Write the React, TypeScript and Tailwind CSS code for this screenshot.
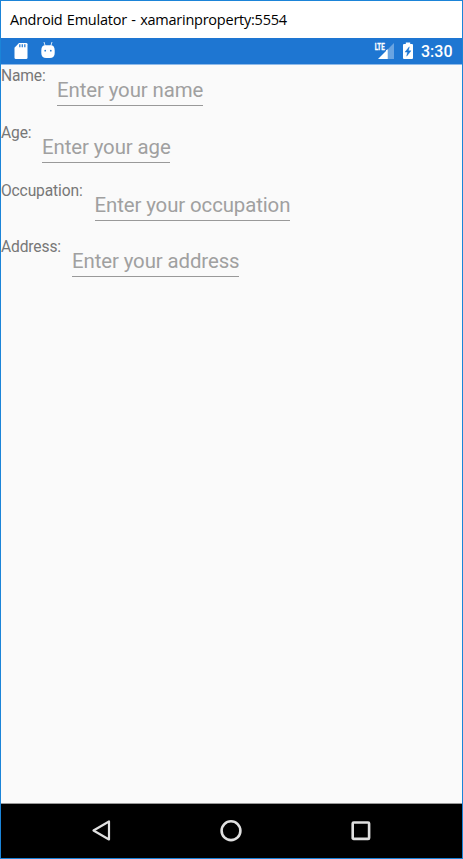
const fields = [
  { label: 'Name:', hint: 'Enter your name', row: 'h-[57px]', gap: 'w-14', width: 'w-[146px]' },
  { label: 'Age:', hint: 'Enter your age', row: 'h-[58px]', gap: 'w-[41px]', width: 'w-[128px]' },
  { label: 'Occupation:', hint: 'Enter your occupation', row: 'h-[56px]', gap: 'w-[93.5px]', width: 'w-[195px]' },
  { label: 'Address:', hint: 'Enter your address', row: 'h-[57px]', gap: 'w-[71px]', width: 'w-[167px]' },
];

function StatusBar() {
  return (
    <div className="flex h-[27px] shrink-0 items-start border-b border-[#8fbae9] bg-[#1e76d2] text-white">
      <svg className="ml-[13px] mt-[4px] h-[17px] w-[14px]" viewBox="0 0 14 17">
        <path d="M5 1H12.2Q13.5 1 13.5 2.3V15.5Q13.5 17 12.2 17H1.8Q.5 17 .5 15.5V5.7Z" fill="#fff" />
        <path d="M5.8 2.3v3M8.3 2.3v3M10.8 2.3v3" stroke="#3c88d8" strokeWidth="1.4" />
      </svg>
      <svg className="ml-[13px] mt-[4px] h-[17px] w-[14px]" viewBox="0 0 14 17">
        <path d="M3 0l1.2 4M11 0L9.8 4" stroke="#d9e8f8" strokeWidth="1" />
        <path d="M.3 8.5Q.3 3.3 4.4 3.3H9.6Q13.7 3.3 13.7 8.5V11Q13.7 16 8.8 16H5.2Q.3 16 .3 11Z" fill="#fff" />
        <circle cx="4.2" cy="8.7" r=".85" fill="#1e76d2" />
        <circle cx="9.8" cy="8.7" r=".85" fill="#1e76d2" />
      </svg>
      <div className="flex-1" />
      <svg className="mt-[4px] h-[18px] w-[21px]" viewBox="0 0 21 18">
        <path d="M20 1V17H13.8V7.2Z" fill="#6aa4e1" />
        <path d="M4 17L12 9V8.2L13.8 7.2V17Z" fill="#fff" />
        <text x=".7" y="7.8" fill="#fff" stroke="#fff" strokeWidth=".35" fontFamily="Roboto, sans-serif" fontWeight="700" fontSize="9.2" textLength="10" lengthAdjust="spacingAndGlyphs">LTE</text>
      </svg>
      <svg className="ml-[7px] mt-[4px] h-[17px] w-[12px]" viewBox="0 0 12 17">
        <path d="M3.8 .5H8.2V2H10Q11 2 11 3V16Q11 17 10 17H2Q1 17 1 16V3Q1 2 2 2H3.8Z" fill="#fff" />
        <path d="M7.3 4.8L3 10.1H5.4L4.7 14.2L9 8.8H6.5Z" fill="#1e76d2" stroke="#1e76d2" strokeWidth=".4" />
      </svg>
      <span className="ml-[7px] mr-[10px] mt-[4px] w-[31px] whitespace-nowrap text-[16px] font-medium leading-[20px]">3:30</span>
    </div>
  );
}

export default function App() {
  return (
    <div className="flex h-[859px] w-[463px] flex-col overflow-hidden border border-[#1b84d8] bg-[#fafafa] font-['Roboto',sans-serif]">
      <header className="h-[37px] shrink-0 whitespace-nowrap bg-white pl-[9px] font-['Open_Sans','Noto_Sans',sans-serif] text-[14.5px] leading-[37px] tracking-[-0.24px] [word-spacing:0.9px] text-black">
        Android Emulator - xamarinproperty:5554
      </header>
      <StatusBar />
      <main className="flex flex-1 flex-col">
        {fields.map(({ label, hint, row, gap, width }) => (
          <div key={label} className={`${row} flex shrink-0 items-start whitespace-nowrap`}>
            <span className={`${gap} shrink-0 pt-[2px] text-[15.6px] leading-[18px] tracking-[-0.14px] text-[#777]`}>{label}</span>
            <span className={`${width} h-[41px] border-b border-[#999] pt-[13px] text-[20.4px] leading-6 tracking-[-0.1px] text-[#a0a0a0]`}>{hint}</span>
          </div>
        ))}
      </main>
      <nav className="flex h-[55px] shrink-0 items-start border-t border-[#999] bg-black pl-[90px] pt-[15px]">
        <svg className="h-6 w-[22px]" viewBox="0 0 22 24" fill="none" stroke="#e0e0e0" strokeWidth="2.2" strokeLinejoin="round">
          <path d="M2.5 11.5L18 2.5V20.5Z" />
        </svg>
        <svg className="ml-[106px] h-6 w-6" viewBox="0 0 24 24" fill="none" stroke="#e0e0e0" strokeWidth="2.6">
          <circle cx="12" cy="11.7" r="9.4" />
        </svg>
        <svg className="ml-[106px] h-6 w-6" viewBox="0 0 24 24" fill="none" stroke="#e0e0e0" strokeWidth="2.6">
          <rect x="3.7" y="3.5" width="16.4" height="16.4" rx="1" />
        </svg>
      </nav>
    </div>
  );
}
